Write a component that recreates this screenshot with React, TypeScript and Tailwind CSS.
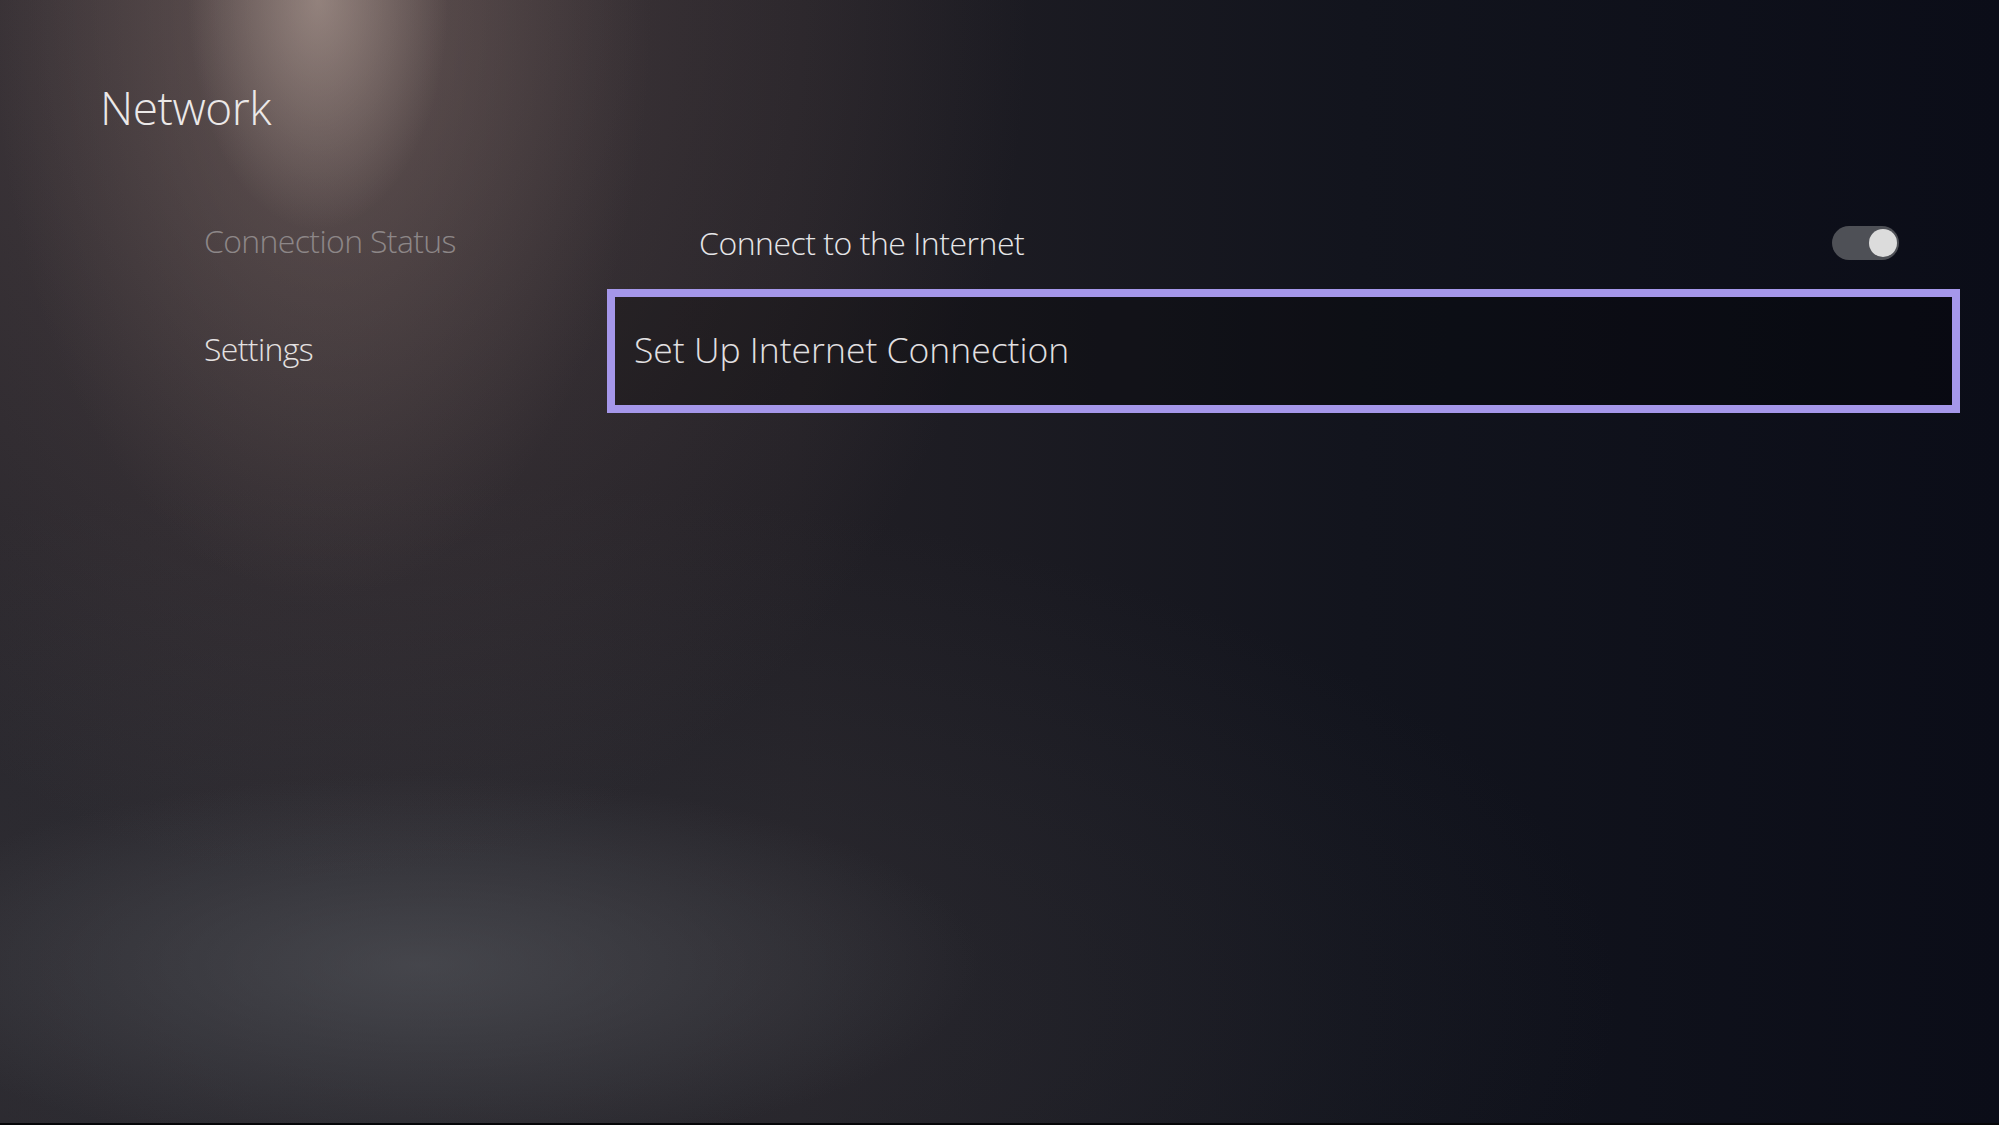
const menu = [
  { id: "status", label: "Connection Status", active: false },
  { id: "settings", label: "Settings", active: true },
];

export default function App() {
  return (
    <div className="w-[1999px] h-[1125px] overflow-hidden border-b-2 border-[#060608] font-['Open_Sans',sans-serif] font-light text-[#e6e4e4] bg-[#15161d] bg-[image:radial-gradient(ellipse_130px_230px_at_318px_0px,rgba(178,160,152,0.6),transparent),radial-gradient(ellipse_330px_600px_at_322px_0px,rgba(135,114,108,0.45),transparent),radial-gradient(ellipse_700px_880px_at_330px_0px,rgba(100,82,82,0.55),transparent),radial-gradient(ellipse_560px_190px_at_420px_965px,rgba(88,90,96,0.55),transparent),radial-gradient(ellipse_1200px_520px_at_420px_1000px,rgba(60,60,66,0.45),transparent),linear-gradient(to_right,#27252b_0%,#211f25_40%,#12141d_68%,#0b0d18_100%)]">
      <div className="pt-[84px] pl-[100px]">
        {/* --- Header --- */}
        <h1 className="text-[46px] leading-[46px] tracking-[-0.01em] text-[#ebe8e8]">Network</h1>

        <div className="flex mt-[59px]">
          {/* --- Left menu --- */}
          <div className="w-[515px] pl-[104px] flex flex-col">
            {menu.map((m) => (
              <div
                key={m.id}
                className={`h-[108px] flex items-center -mt-[2px] mb-[2px] text-[32px] leading-[32px] tracking-[-0.02em] ${
                  m.active ? "text-[#e4e1e1]" : "text-[#8d8788]"
                }`}
              >
                {m.label}
              </div>
            ))}
          </div>

          {/* --- Right content --- */}
          <div className="w-[1337px] flex flex-col">
            <div className="h-[108px] flex items-center justify-between pl-[84px] pr-[53px]">
              <span className="text-[32px] leading-[32px] tracking-[-0.015em] text-[#e6e6e8]">
                Connect to the Internet
              </span>
              <div className="w-[67px] h-[34px] rounded-full bg-[#4e5056] flex items-center justify-end pr-[2px]">
                <div className="w-[28px] h-[28px] rounded-full bg-[#dcdcdc]" />
              </div>
            </div>
            <div className="h-[108px] flex items-center pl-[19px] pb-[4px] bg-black/25 outline-8 outline-solid outline-[#a597ea]">
              <span className="text-[35.5px] leading-[36px] text-[#e2e0e2]">Set Up Internet Connection</span>
            </div>
          </div>
        </div>
      </div>
    </div>
  );
}
